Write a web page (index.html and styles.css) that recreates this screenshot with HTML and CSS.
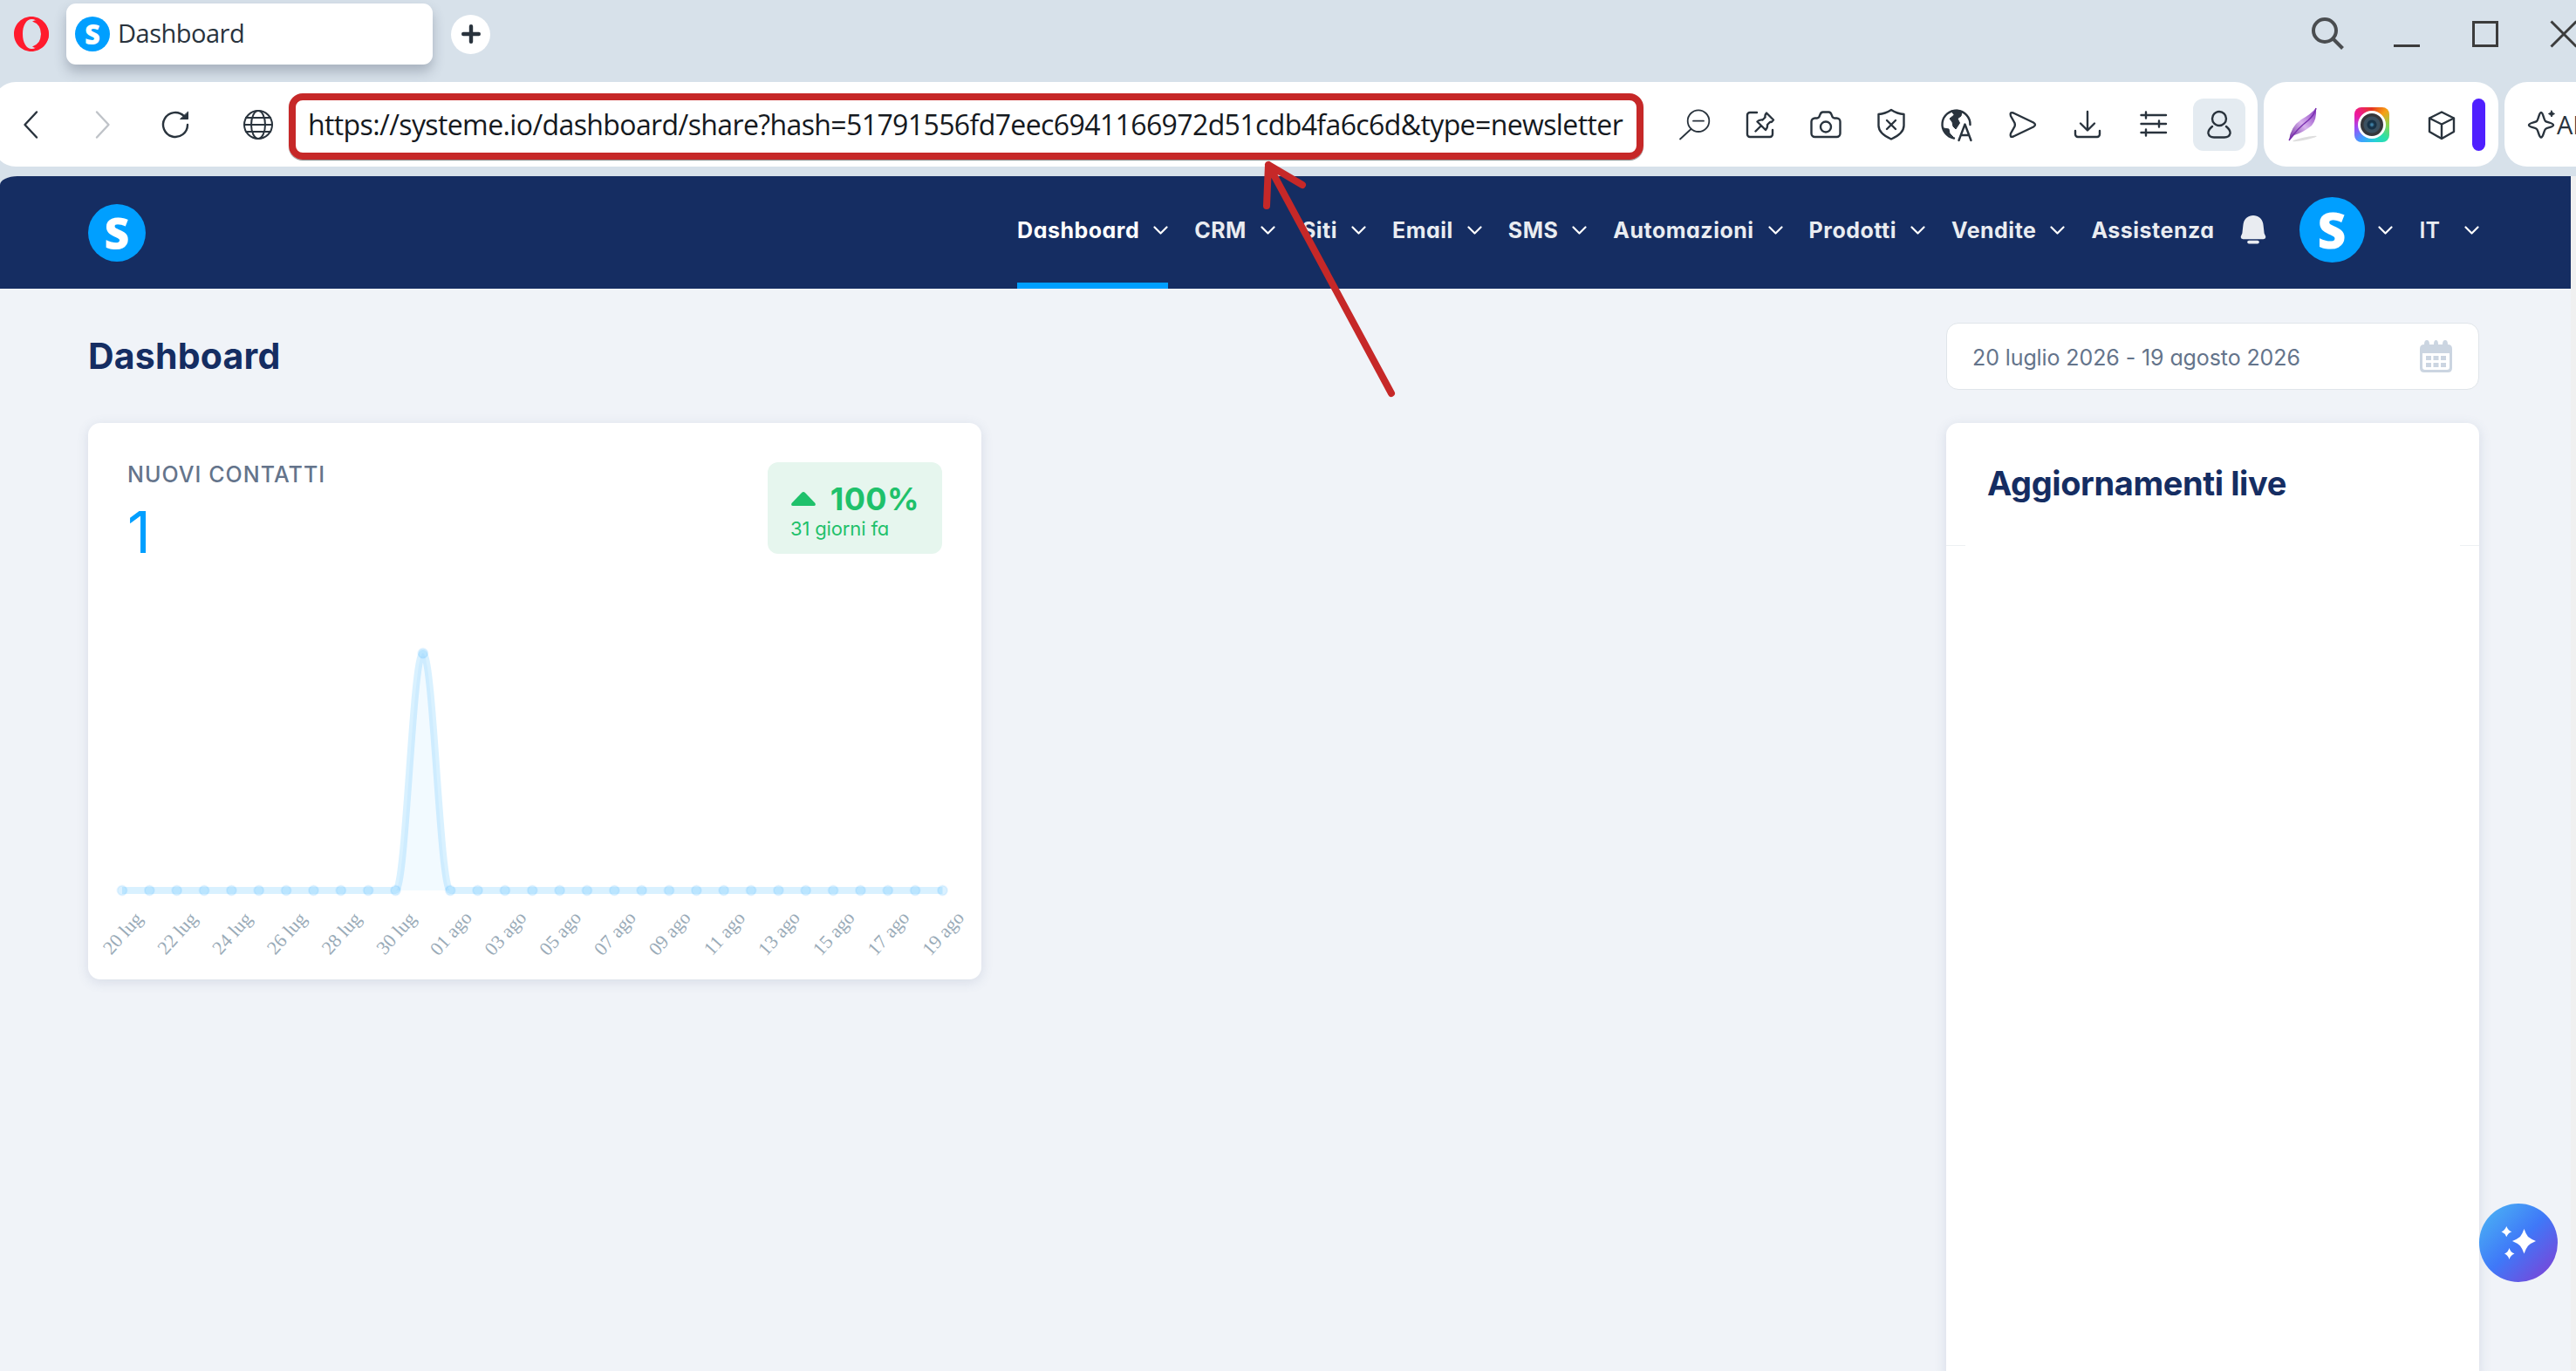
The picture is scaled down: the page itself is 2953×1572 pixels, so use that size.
FILE: index.html
```html
<!DOCTYPE html>
<html lang="it">

<head>
  <meta charset="UTF-8">
  <meta name="viewport" content="width=device-width, initial-scale=1.0">
  <title>Dashboard</title>
  <link rel="stylesheet" href="styles.css">
</head>

<body>
  <!-- Tab strip -->
  <div class="tabstrip">
    <svg class="opera" viewBox="0 0 40 40">
      <path fill="#ff1b2d" fill-rule="evenodd" d="M20 0C31 0 40 9 40 20S31 40 20 40S0 31 0 20S9 0 20 0zM20.500 3C14 3 10 10.500 10 20S14 37 20.500 37S31 29.500 31 20S27 3 20.500 3z" />
      <path fill="#ff1b2d" d="M21 5.500Q25 3 30 4.500Q40 10 40 20T30 35.500Q25 37 21 34.500Q31 31 31 20T21 5.500z" />
    </svg>
    <div class="tab">
      <span class="logo logo-tab">S</span>
      <span class="tab-title">Dashboard</span>
    </div>
    <div class="new-tab">
      <svg viewBox="0 0 20 20"><path d="M10 2v16M2 10h16" /></svg>
    </div>
    <div class="window-buttons">
      <svg class="search" viewBox="0 0 40 40"><circle cx="16" cy="16" r="13" /><path d="M25 25l11.500 11.500" /></svg>
      <svg viewBox="0 0 40 40"><path d="M5 33.500h30" /></svg>
      <svg viewBox="0 0 40 40"><path d="M6.500 6.500h27v27h-27z" /></svg>
      <svg viewBox="0 0 40 40"><path d="M5.500 5.500l29 29M34.500 5.500l-29 29" /></svg>
    </div>
  </div>

  <!-- Address bar -->
  <div class="toolbar">
    <div class="panel address-bar">
      <svg class="icon" viewBox="0 0 40 40"><path d="M27 5.500L13.500 20L27 34.500" /></svg>
      <svg class="icon disabled" viewBox="0 0 40 40"><path d="M13 5.500L26.500 20L13 34.500" /></svg>
      <svg class="icon" viewBox="0 0 40 40"><path d="M34 20A14 14 0 1 1 30 10.200" /><path class="solid" d="M26 13.500h8.500V5.500z" /></svg>
      <svg class="icon globe" viewBox="0 0 40 40"><circle cx="20" cy="20" r="16" /><ellipse cx="20" cy="20" rx="8" ry="16" /><path d="M4 20h32M6 12h28M6 28h28" /></svg>
      <div class="url"><span>https://systeme.io/dashboard/share?hash=51791556fd7eec6941166972d51cdb4fa6c6d&amp;type=newsletter</span></div>
      <div class="actions">
        <svg class="icon thin" viewBox="0 0 40 40"><circle cx="24" cy="15.700" r="12.300" /><path d="M18 15.700h12M15.500 25L3 36.500" /></svg>
        <svg class="icon" viewBox="0 0 40 40"><path d="M16 6H8a3 3 0 0 0-3 3v22a3 3 0 0 0 3 3h23a3 3 0 0 0 3-3v-5" /><path d="M27 6.500l8 8q-1.500 2.500-4 2.500l-3 3q.5 4-2 6l-9.500-9.500q2-2.500 6-2l3-3q-.5-3 1.500-5zM21 21l-6.500 6.500" /></svg>
        <svg class="icon" viewBox="0 0 40 40"><path d="M3.500 16.500a4 4 0 0 1 4-4h2.500c2 0 2.500-1 3.200-3.500c.8-2.500 1.500-3.500 3.500-3.500h6.600c2 0 2.700 1 3.500 3.500c.7 2.500 1.200 3.500 3.200 3.500h2.500a4 4 0 0 1 4 4v13.500a4 4 0 0 1-4 4h-25a4 4 0 0 1-4-4z" /><circle cx="20" cy="22.500" r="6" /></svg>
        <svg class="icon" viewBox="0 0 40 40"><path d="M20 3q7 4.500 14.500 5v13q0 9-14.500 15.500Q5.500 30 5.500 21V8Q13 7.500 20 3zM15 15l10 10M25 15L15 25" /></svg>
        <svg class="icon" viewBox="0 0 40 40"><path d="M17 35.500A16 16 0 1 1 35.500 20" /><path class="solid" d="M14 4q8-2 12 1l-1 5l-4 3l2.500 5l-4.500 7l-3-3l-1-5l-3-4l5-4zM5 24l6 1l1 5l4 4q-8-2-11-10z" /><path d="M22.500 38l7-18.500l7 18.500M25 32h9" /></svg>
        <svg class="icon" viewBox="0 0 40 40"><path d="M10 6.500L33 17.500q4 2.500 0 5L10 33.500q-4.500 1.500-3-3.500l4.500-8q.8-2 0-4L7 10q-1.500-5 3-3.500z" /></svg>
        <svg class="icon" viewBox="0 0 40 40"><path d="M20 5v21M12 18.500l8 8l8-8M6 27v4a3 3 0 0 0 3 3h22a3 3 0 0 0 3-3v-4" /></svg>
        <svg class="icon" viewBox="0 0 40 40"><path d="M6.500 9h28.500M6.500 19h28.500M6.500 29h28.500M12 5.500v7M27 15.500v7M12 25.500v7" /></svg>
      </div>
      <div class="profile">
        <svg class="icon" viewBox="0 0 40 40"><circle cx="20" cy="13" r="8" /><path d="M12 22q-5 4-4.500 8q1 4.500 6.500 4.500h12q5.500 0 6.500-4.500q.5-4-4.500-8" /></svg>
      </div>
    </div>

    <div class="panel extensions">
      <svg viewBox="0 0 40 40">
        <defs>
          <linearGradient id="feather" x1="0" y1="1" x2="1" y2="0">
            <stop offset="0" stop-color="#6d2a9c" />
            <stop offset=".5" stop-color="#d9b3ee" />
            <stop offset="1" stop-color="#8a3cc0" />
          </linearGradient>
        </defs>
        <ellipse cx="20" cy="36" rx="14" ry="1.500" fill="#dedede" transform="rotate(-12 20 36)" />
        <path fill="url(#feather)" d="M2 38Q4 22 16 14Q27 8 33 1Q34 14 28 21Q18 29 8 32z" />
        <path fill="none" stroke="#7a2fb0" stroke-width="1.500" d="M2 38Q12 24 24 15Q31 9 33 1" />
      </svg>
      <div class="lens"><span></span></div>
      <svg class="icon cube" viewBox="0 0 40 40"><path d="M20 5.500l14 7v15.500L20 36L6 28V12.500zM6 12.500l14 7l14-7M20 19.500V36" /></svg>
      <div class="pill"></div>
    </div>

    <div class="panel ai">
      <svg class="icon" viewBox="0 0 40 40"><path d="M20 6c2.500 0 3 8.500 5 10s9 2 9 4.500s-7 2.500-9 4.500s-2.500 9.500-5 9.500s-3-7.500-5-9.500s-9-2-9-4.500s7-3 9-4.500s2.500-10 5-10z" /><path class="solid" d="M32 4l1.200 2.300L35.500 7.500l-2.300 1.200L32 11l-1.200-2.300L28.500 7.500l2.300-1.200z" /></svg>
      <span>AI</span>
    </div>
  </div>

  <!-- Web page -->
  <div class="viewport">
    <div class="page">
      <header class="header">
        <span class="logo logo-header">S</span>
        <nav class="nav">
          <a class="active"><span>Dashboard</span><svg class="chevron" viewBox="0 0 17 10"><path d="M1.500 1.500l7 7l7-7" /></svg></a>
          <a><span>CRM</span><svg class="chevron" viewBox="0 0 17 10"><path d="M1.500 1.500l7 7l7-7" /></svg></a>
          <a><span>Siti</span><svg class="chevron" viewBox="0 0 17 10"><path d="M1.500 1.500l7 7l7-7" /></svg></a>
          <a><span>Email</span><svg class="chevron" viewBox="0 0 17 10"><path d="M1.500 1.500l7 7l7-7" /></svg></a>
          <a><span>SMS</span><svg class="chevron" viewBox="0 0 17 10"><path d="M1.500 1.500l7 7l7-7" /></svg></a>
          <a><span>Automazioni</span><svg class="chevron" viewBox="0 0 17 10"><path d="M1.500 1.500l7 7l7-7" /></svg></a>
          <a><span>Prodotti</span><svg class="chevron" viewBox="0 0 17 10"><path d="M1.500 1.500l7 7l7-7" /></svg></a>
          <a><span>Vendite</span><svg class="chevron" viewBox="0 0 17 10"><path d="M1.500 1.500l7 7l7-7" /></svg></a>
          <a><span>Assistenza</span></a>
        </nav>
        <svg class="bell" viewBox="0 0 30 34"><path d="M15 0C22 0 26.500 5 27 12L28 21L29.500 24.500Q30.500 28 27 28H3Q-.5 28 .5 24.500L2 21L3 12C3.500 5 8 0 15 0z" /><rect x="8" y="29.500" width="14" height="4" rx="2" /></svg>
        <span class="logo logo-avatar">S</span>
        <svg class="chevron" viewBox="0 0 17 10"><path d="M1.500 1.500l7 7l7-7" /></svg>
        <span class="lang">IT</span>
        <svg class="chevron" viewBox="0 0 17 10"><path d="M1.500 1.500l7 7l7-7" /></svg>
      </header>

      <main class="content">
        <div class="title-row">
          <h1>Dashboard</h1>
          <div class="date-range">
            <span>20 luglio 2026 - 19 agosto 2026</span>
            <svg viewBox="0 0 37 37">
              <path fill="#cbd5e1" fill-rule="evenodd" d="M5 5Q5 0 8 0T11 5H16Q16 0 18.500 0T21 5H26Q26 0 29 0T32 5Q37 5 37 10V32Q37 37 32 37H5Q0 37 0 32V10Q0 5 5 5zM3 15V31Q3 34 6 34H31Q34 34 34 31V15z" />
              <path fill="#cbd5e1" d="M7 18h6v5H7zM15.500 18h6v5h-6zM24 18h6v5h-6zM7 26h6v5H7zM15.500 26h6v5h-6zM24 26h6v5h-6z" />
            </svg>
          </div>
        </div>

        <div class="cards">
          <section class="card contacts">
            <div class="contacts-head">
              <div>
                <h2>NUOVI CONTATTI</h2>
                <p class="count">1</p>
              </div>
              <div class="badge">
                <div class="percent">
                  <svg viewBox="0 0 28 16"><path d="M12 1Q14-1 16 1L27.500 13Q28.500 16 26 16H2Q-.5 16 .5 13z" /></svg>
                  <span>100%</span>
                </div>
                <small>31 giorni fa</small>
              </div>
            </div>
            <svg class="chart" id="chart" viewBox="0 0 1024 488"></svg>
          </section>

          <section class="card live">
            <h3>Aggiornamenti live</h3>
            <div class="divider"></div>
          </section>
        </div>
      </main>
    </div>
    <div class="scrollbar"></div>
  </div>

  <div class="assistant">
    <svg viewBox="0 0 40 40"><path d="M26.500 3Q28.500 9 31 12Q34 14.500 40 17Q34 19.500 31 22.500Q28.500 25.500 26.500 31.500Q24.500 25.500 22 22.500Q19 19.500 13 17Q19 14.500 22 12Q24.500 9 26.500 3zM6.300 0Q8 5 12.300 6.300Q8 8 6.300 12.300Q4.500 8 .5 6.300Q4.500 5 6.300 0zM9.500 25Q11 30 15.500 31.500Q11 33 9.500 38Q8 33 4 31.500Q8 30 9.500 25z" /></svg>
  </div>

  <!-- Highlight arrow pointing at the link -->
  <svg class="arrow" viewBox="0 0 160 276"><path d="M8 6L149 268M6 53L8 6L47 29" /></svg>

  <script>
    // Contacts per day, 20 lug - 19 ago
    const values = new Array(31).fill(0);
    values[11] = 1;

    const labels = ['20 lug', '22 lug', '24 lug', '26 lug', '28 lug', '30 lug', '01 ago', '03 ago',
      '05 ago', '07 ago', '09 ago', '11 ago', '13 ago', '15 ago', '17 ago', '19 ago'];

    const left = 39, step = 31.35, bottom = 386, peak = 114;
    const x = i => left + i * step;
    const y = v => bottom - v * (bottom - peak);

    let line = `M${x(0)} ${y(values[0])}`;
    for (let i = 1; i < values.length; i++) {
      line += `C${x(i - 1) + 12} ${y(values[i - 1])} ${x(i) - 12} ${y(values[i])} ${x(i)} ${y(values[i])}`;
    }

    let svg = `<path class="area" d="${line}" /><path class="line" d="${line}" />`;
    values.forEach((v, i) => {
      svg += `<circle class="point" cx="${x(i)}" cy="${y(v)}" r="5.5" />`;
    });
    labels.forEach((text, i) => {
      svg += `<text transform="translate(${x(i * 2) + 6} 440) rotate(-48)" text-anchor="middle">${text}</text>`;
    });
    document.getElementById('chart').innerHTML = svg;
  </script>
</body>

</html>
```
FILE: styles.css
```css
* {
  box-sizing: border-box;
}

body {
  margin: 0;
  width: 2953px;
  height: 1572px;
  overflow: hidden;
  position: relative;
  background: #d7e1ea;
  font-family: "Inter", sans-serif;
}

svg {
  display: block;
  flex: none;
}

h1, h2, h3, p {
  margin: 0;
}

/* Tab strip */
.tabstrip {
  display: flex;
  align-items: center;
  height: 94px;
  padding: 0 0 16px 16px;
}

.opera {
  width: 40px;
  height: 40px;
}

.tab {
  display: flex;
  align-items: center;
  width: 420px;
  height: 70px;
  margin-left: 20px;
  padding-left: 10px;
  border-radius: 11px;
  background: #fff;
  box-shadow: 0 8px 14px rgba(60, 70, 90, 0.3);
}

.logo {
  display: flex;
  align-items: center;
  justify-content: center;
  flex: none;
  border-radius: 50%;
  background: #009fff;
  color: #fff;
  font-family: "Open Sans", sans-serif;
  font-weight: 800;
  line-height: 1;
}

.logo-tab {
  width: 40px;
  height: 40px;
  font-size: 31px;
}

.tab-title {
  margin-left: 9px;
  padding-bottom: 3px;
  color: #29333d;
  font-family: "Open Sans", sans-serif;
  font-size: 29px;
  letter-spacing: -0.5px;
}

.new-tab {
  display: flex;
  align-items: center;
  justify-content: center;
  width: 45px;
  height: 45px;
  margin-left: 21px;
  border-radius: 50%;
  background: #fff;
}

.new-tab svg {
  width: 22px;
  fill: none;
  stroke: #29333d;
  stroke-width: 4;
  stroke-linecap: round;
}

.window-buttons {
  display: flex;
  gap: 50px;
  margin-left: auto;
  margin-right: -6px;
}

.window-buttons svg {
  width: 40px;
  height: 40px;
  fill: none;
  stroke: #3c3c3c;
  stroke-width: 3;
}

.window-buttons .search {
  stroke: #4a4d50;
  stroke-width: 4;
}

/* Address bar */
.toolbar {
  display: flex;
  gap: 7px;
  height: 108px;
  padding-bottom: 11px;
  margin-left: -8px;
}

.panel {
  display: flex;
  align-items: center;
  flex: none;
  border-radius: 26px;
  background: #fff;
}

.address-bar {
  width: 2596px;
  padding: 0 14px 0 23px;
}

.icon {
  width: 40px;
  height: 40px;
  fill: none;
  stroke: #29333d;
  stroke-width: 2.4;
  stroke-linejoin: round;
  stroke-linecap: round;
}

.icon .solid {
  fill: #29333d;
  stroke-width: 1;
}

.address-bar > .icon {
  margin-right: 43px;
}

.address-bar > .globe {
  margin: 0 15px 0 12px;
  stroke-width: 2;
}

.disabled {
  stroke: #bfc3c8;
}

.thin {
  stroke-width: 1.8;
}

.url {
  display: flex;
  align-items: center;
  width: 1553px;
  height: 76px;
  margin-top: 5px;
  padding: 0 0 5px 14px;
  border: 8px solid #c62828;
  border-radius: 16px;
  box-shadow: 0 1px 1px rgba(0, 0, 0, 0.5);
  color: #15191e;
  font-family: "Open Sans", sans-serif;
  font-size: 32px;
  letter-spacing: -0.61px;
  line-height: 1;
  white-space: nowrap;
}

.actions {
  display: flex;
  gap: 35px;
  margin-left: auto;
}

.profile {
  width: 60px;
  height: 60px;
  margin-left: 26px;
  padding: 10px;
  border-radius: 12px;
  background: #e4ebf1;
}

.extensions {
  width: 269px;
  padding-left: 27px;
}

.extensions > svg {
  width: 40px;
  height: 40px;
}

.lens {
  display: flex;
  align-items: center;
  justify-content: center;
  width: 40px;
  height: 40px;
  margin-left: 37px;
  border-radius: 8px;
  background: conic-gradient(from 0deg, #e5351f, #f7a013 45deg, #8bd44f 90deg, #2be0a8 135deg, #25d0d8 170deg, #3fa0ff 215deg, #a04bf5 260deg, #f0189c 305deg, #e5351f);
}

.lens span {
  width: 32px;
  height: 32px;
  border: 3px solid #fff;
  border-radius: 50%;
  background: radial-gradient(circle, #3f7fa5 0 1px, #173247 3px 5px, #3b5060 6px 9px, #35373b 10px);
}

.cube {
  margin-left: 40px;
}

.pill {
  width: 15px;
  height: 60px;
  margin-left: 15px;
  border-radius: 8px;
  background: #4f1fff;
}

.ai {
  width: 200px;
  padding-left: 22px;
  color: #29333d;
  font-family: "Open Sans", sans-serif;
  font-size: 29px;
}

.ai span {
  margin-left: -2px;
}

/* Web page */
.viewport {
  display: flex;
  height: 1370px;
}

.page {
  width: 2947px;
  overflow: hidden;
  border-top-left-radius: 20px 10px;
  background: #f0f3f8;
}

.scrollbar {
  flex: 1;
  background: #f0f0f0;
}

.header {
  display: flex;
  align-items: center;
  height: 129px;
  padding: 0 105px 6px 101px;
  background: #152d62;
  color: #e9ecf1;
  font-feature-settings: "cv11";
}

.logo-header {
  width: 66px;
  height: 66px;
  margin-top: 6px;
  font-size: 50px;
}

.nav {
  display: flex;
  gap: 30px;
  align-self: stretch;
  margin-bottom: -6px;
  margin-left: auto;
  font-size: 25px;
  font-weight: 700;
  letter-spacing: 0.5px;
}

.nav a {
  display: flex;
  align-items: center;
  gap: 16px;
  padding-bottom: 6px;
}

.nav .active {
  color: #fff;
  box-shadow: inset 0 -7px #009fff;
}

.chevron {
  width: 17px;
  height: 10px;
  fill: none;
  stroke: #fff;
  stroke-width: 2.2;
  stroke-linecap: round;
  stroke-linejoin: round;
}

.bell {
  width: 30px;
  height: 33px;
  margin-left: 29px;
  fill: #e9ecf1;
}

.logo-avatar {
  width: 75px;
  height: 75px;
  margin: 0 15px 0 38px;
  font-size: 57px;
}

.lang {
  margin: 0 28px 0 31px;
  font-size: 25px;
  font-weight: 600;
}

.content {
  padding: 39px 105px 0 101px;
}

.title-row {
  display: flex;
  justify-content: space-between;
  align-items: center;
  height: 77px;
  margin-bottom: 38px;
}

h1 {
  padding-bottom: 1px;
  color: #152d62;
  font-size: 41px;
  font-weight: 700;
  letter-spacing: 0.2px;
}

.date-range {
  display: flex;
  align-items: center;
  justify-content: space-between;
  width: 611px;
  height: 77px;
  padding: 0 30px 0 29px;
  border: 1px solid #e0e5ea;
  border-radius: 14px;
  background: #fff;
  color: #64748b;
  font-size: 25px;
  font-feature-settings: "cv11";
  letter-spacing: -0.1px;
}

.date-range span {
  padding-top: 3px;
}

.date-range svg {
  width: 37px;
}

.cards {
  display: flex;
  justify-content: space-between;
  align-items: flex-start;
}

.card {
  border-radius: 14px;
  background: #fff;
  box-shadow: 0 3px 14px rgba(80, 100, 140, 0.16);
}

.contacts {
  width: 1024px;
  height: 638px;
  font-feature-settings: "cv11";
}

.contacts-head {
  display: flex;
  justify-content: space-between;
  height: 150px;
  padding: 45px 45px 0 45px;
}

h2 {
  color: #64748b;
  font-size: 25px;
  font-weight: 500;
  letter-spacing: 1.05px;
  line-height: 28px;
}

.count {
  margin-top: 12px;
  color: #009fff;
  font-size: 66px;
  line-height: 80px;
}

.badge {
  width: 200px;
  height: 105px;
  padding: 20px 26px 20px 27px;
  border-radius: 12px;
  background: #e6f6ee;
  color: #1fc16b;
}

.percent {
  display: flex;
  align-items: center;
  justify-content: space-between;
  height: 44px;
  font-size: 36px;
  font-weight: 700;
  letter-spacing: 0.4px;
}

.percent svg {
  width: 28px;
  fill: #1fc16b;
}

small {
  display: block;
  margin-left: -1px;
  font-size: 22px;
  letter-spacing: -0.15px;
  line-height: 24px;
}

.chart {
  width: 1024px;
  height: 488px;
}

.chart .area {
  fill: rgba(0, 149, 255, 0.05);
}

.chart .line {
  fill: none;
  stroke: rgba(0, 159, 255, 0.15);
  stroke-width: 8;
}

.chart .point {
  fill: rgba(0, 159, 255, 0.14);
  stroke: rgba(0, 159, 255, 0.08);
  stroke-width: 2;
}

.chart text {
  fill: #9aabb8;
  font: 22px "Liberation Serif", serif;
}

.live {
  width: 611px;
  height: 1100px;
}

h3 {
  height: 140px;
  padding: 46px 0 0 47px;
  color: #152d62;
  font-size: 38px;
  font-weight: 700;
  letter-spacing: -0.4px;
  line-height: 46px;
}

.divider {
  display: flex;
  justify-content: space-between;
}

.divider::before,
.divider::after {
  content: "";
  width: 22px;
  height: 1px;
  background: #edf0f3;
}

/* Floating assistant button */
.assistant {
  position: absolute;
  left: 2842px;
  top: 1380px;
  width: 90px;
  height: 90px;
  border-radius: 50%;
  background: linear-gradient(135deg, #48a6f5 15%, #3f78f8 50%, #7a45d8 92%);
}

.assistant svg {
  width: 40px;
  margin: 26px 0 0 25px;
  fill: #fff;
}

.arrow {
  position: absolute;
  left: 1446px;
  top: 183px;
  width: 160px;
  height: 276px;
  fill: none;
  stroke: #c62828;
  stroke-width: 8;
  stroke-linecap: round;
  stroke-linejoin: round;
}
```
